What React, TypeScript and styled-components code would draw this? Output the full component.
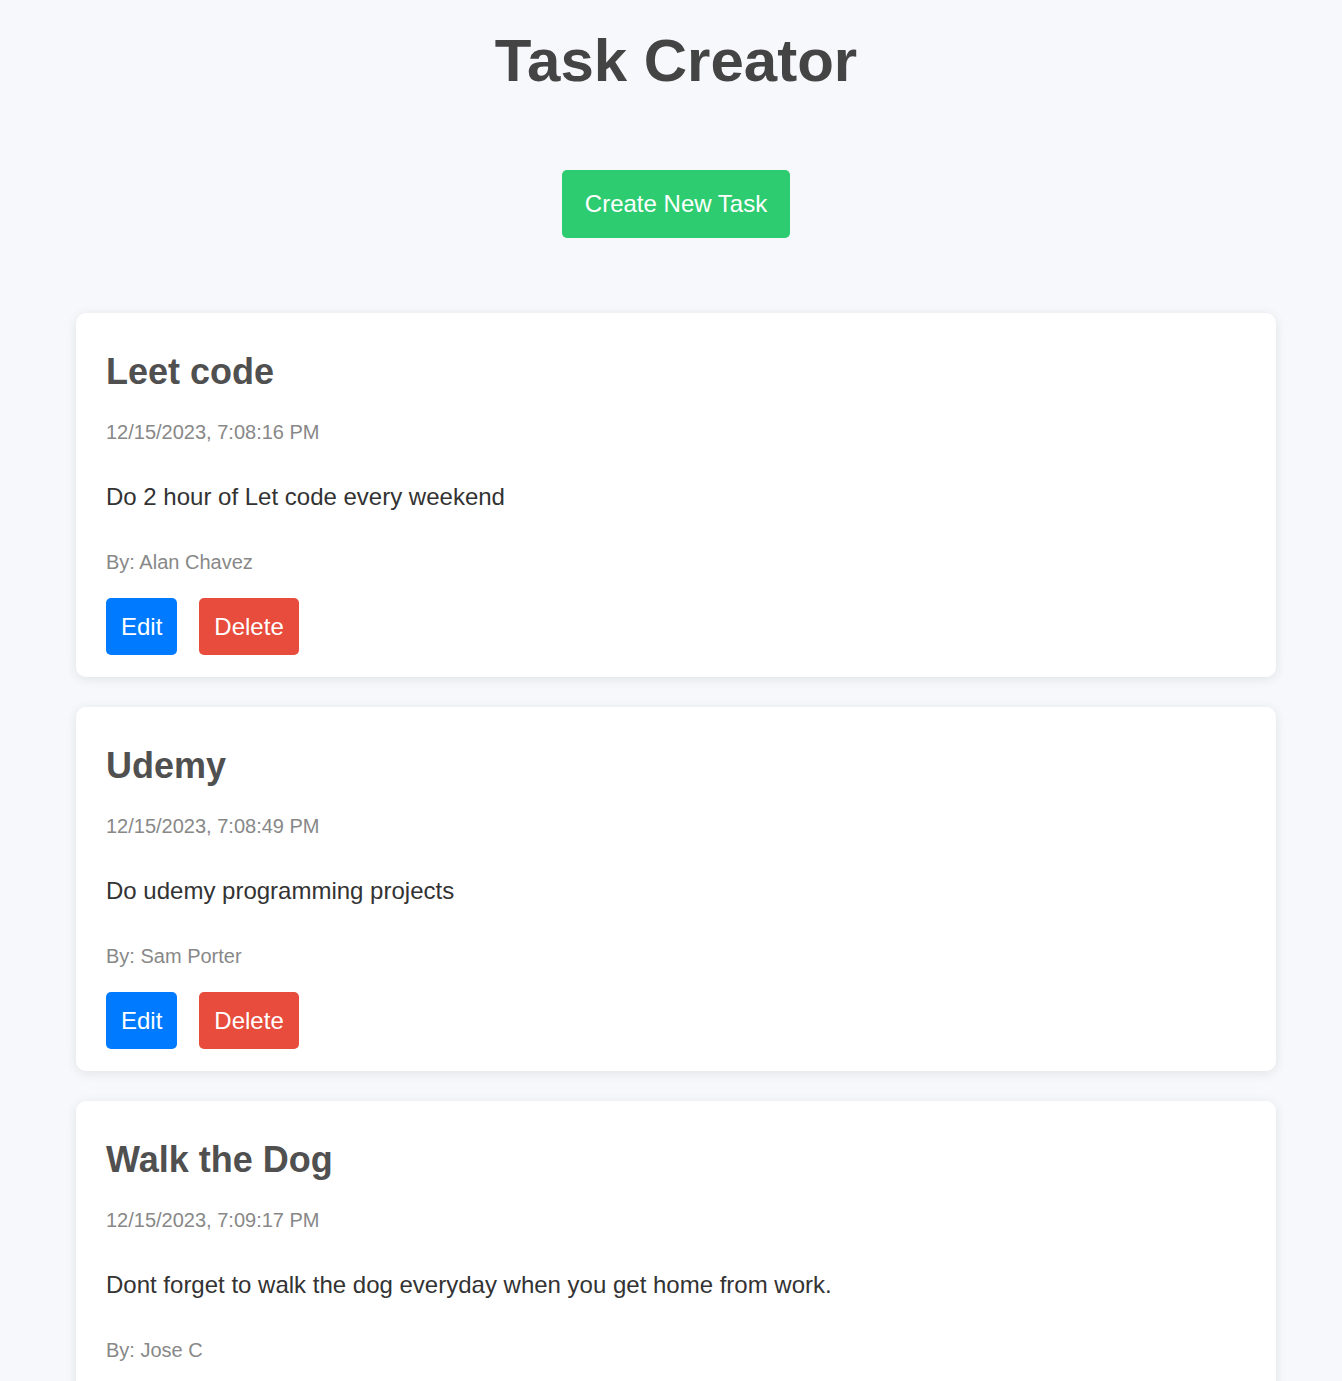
import React from 'react';
import styled, { createGlobalStyle } from 'styled-components';

const GlobalStyle = createGlobalStyle`
  html, body {
    margin: 0;
    padding: 0;
    background: #f7f8fc;
    font-family: "Liberation Sans", Arial, sans-serif;
  }
`;

const StyledPage = styled.div`
  display: flex;
  flex-direction: column;
  align-items: center;
  padding: 26px 0 40px 10px;

  .page__title {
    margin: 0;
    font-size: 60px;
    font-weight: 700;
    color: #444;
  }
`;

const CreateButton = styled.button`
  margin: 75px 0;
  padding: 20px 23px;
  border: none;
  border-radius: 5px;
  background: #2ecc71;
  color: #fff;
  font-family: inherit;
  font-size: 24px;
  cursor: pointer;
`;

const StyledTaskList = styled.div`
  display: flex;
  flex-direction: column;
  gap: 30px;
  width: 100%;
  max-width: 1200px;
`;

const StyledCard = styled.div`
  display: flex;
  flex-direction: column;
  align-items: flex-start;
  padding: 38px 30px 22px;
  background: #fff;
  border-radius: 10px;
  box-shadow: 0 2px 12px rgba(0, 0, 0, 0.09);

  .task__title {
    margin: 0 0 28px;
    font-size: 36px;
    font-weight: 700;
    color: #505050;
  }

  .task__date {
    margin: 0 0 39px;
    font-size: 20px;
    color: #888;
  }

  .task__text {
    margin: 0 0 40px;
    font-size: 24px;
    color: #333;
  }

  .task__author {
    margin: 0 0 24px;
    font-size: 20px;
    color: #888;
  }
`;

const StyledActions = styled.div`
  display: flex;
  gap: 22px;
`;

const ActionButton = styled.button<{ $color: string }>`
  padding: 15px;
  border: none;
  border-radius: 5px;
  background: ${(p) => p.$color};
  color: #fff;
  font-family: inherit;
  font-size: 24px;
  line-height: 27px;
  cursor: pointer;
`;

interface ITask {
  id: number;
  title: string;
  date: string;
  text: string;
  author: string;
}

const tasks: ITask[] = [
  {
    id: 1,
    title: 'Leet code',
    date: '12/15/2023, 7:08:16 PM',
    text: 'Do 2 hour of Let code every weekend',
    author: 'Alan Chavez',
  },
  {
    id: 2,
    title: 'Udemy',
    date: '12/15/2023, 7:08:49 PM',
    text: 'Do udemy programming projects',
    author: 'Sam Porter',
  },
  {
    id: 3,
    title: 'Walk the Dog',
    date: '12/15/2023, 7:09:17 PM',
    text: 'Dont forget to walk the dog everyday when you get home from work.',
    author: 'Jose C',
  },
];

const Task = ({ title, date, text, author }: ITask) => {
  return (
    <StyledCard className="task">
      <h2 className="task__title">{title}</h2>
      <p className="task__date">{date}</p>
      <p className="task__text">{text}</p>
      <p className="task__author">By: {author}</p>
      <StyledActions>
        <ActionButton $color="#007bff">Edit</ActionButton>
        <ActionButton $color="#e74c3c">Delete</ActionButton>
      </StyledActions>
    </StyledCard>
  );
};

const App = () => {
  return (
    <>
      <GlobalStyle />
      <StyledPage>
        <h1 className="page__title">Task Creator</h1>
        <CreateButton>Create New Task</CreateButton>
        <StyledTaskList>
          {tasks.map((task) => (
            <Task key={task.id} {...task} />
          ))}
        </StyledTaskList>
      </StyledPage>
    </>
  );
};

export default App;
